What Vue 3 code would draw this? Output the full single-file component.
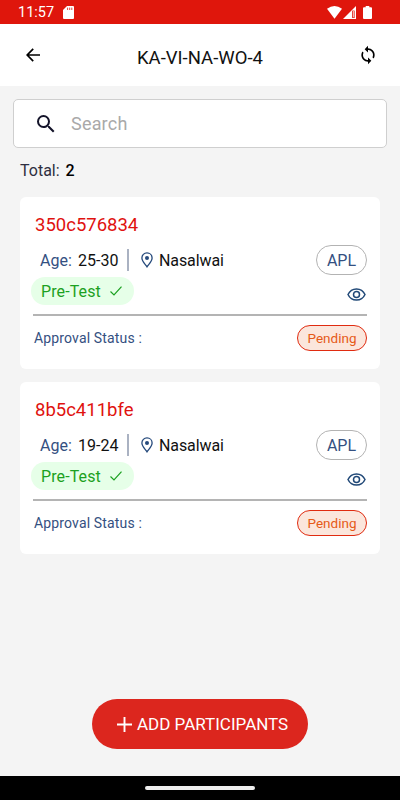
<script setup>
const total = 2
const participants = [
  { id: '350c576834', age: '25-30', place: 'Nasalwai', category: 'APL', status: 'Pending' },
  { id: '8b5c411bfe', age: '19-24', place: 'Nasalwai', category: 'APL', status: 'Pending' }
]
</script>

<template>
  <div class="screen">
    <div class="statusbar">
      <span class="clock">11:57</span>
      <svg class="sd" width="11" height="13" viewBox="0 0 11 13">
        <path d="M4 0H10Q11 0 11 1V12Q11 13 10 13H1Q0 13 0 12V4Z" fill="#fff" />
        <path d="M4.6 1.6V4M6.7 1.6V4M8.8 1.6V4" stroke="#df160c" stroke-width=".8" />
      </svg>
      <span class="grow"></span>
      <svg width="15" height="13" viewBox="0 0 15 13">
        <path d="M0 2.8Q7.5-2.6 15 2.8L7.5 12.8Z" fill="#fff" />
      </svg>
      <svg class="signal" width="13" height="13" viewBox="0 0 13 13">
        <path d="M0 13L13 0V13Z" fill="#fff" />
        <path d="M9.2 4.6H11.6V12H9.2Z" fill="#df160c" />
        <path d="M10.5 5V11.4" stroke="#fff" stroke-width=".7" />
      </svg>
      <svg class="battery" width="9" height="13" viewBox="0 0 9 13">
        <path d="M2.7 0H6.3V1.3H8Q9 1.3 9 2.3V12Q9 13 8 13H1Q0 13 0 12V2.3Q0 1.3 1 1.3H2.7Z" fill="#fff" />
      </svg>
    </div>

    <header class="header">
      <svg width="14" height="14" viewBox="0 0 14 14" fill="none" stroke="#000" stroke-width="1.7">
        <path d="M14 7H1.5M7.2 .8L1.2 7L7.2 13.2" />
      </svg>
      <h1 class="title">KA-VI-NA-WO-4</h1>
      <svg class="sync" width="20" height="20" viewBox="0 0 24 24" fill="#000">
        <path d="M12 4V1L8 5l4 4V6c3.31 0 6 2.69 6 6 0 1.01-.25 1.97-.7 2.8l1.46 1.46C19.54 15.03 20 13.57 20 12c0-4.42-3.58-8-8-8zm0 14c-3.31 0-6-2.69-6-6 0-1.01.25-1.97.7-2.8L5.24 7.74C4.46 8.97 4 10.43 4 12c0 4.42 3.58 8 8 8v3l4-4-4-4v3z" />
      </svg>
    </header>

    <main class="content">
      <div class="search">
        <svg width="24" height="24" viewBox="0 0 24 24" fill="#14142a">
          <path d="M15.5 14h-.79l-.28-.27A6.47 6.47 0 0 0 16 9.5 6.5 6.5 0 1 0 9.5 16c1.61 0 3.09-.59 4.23-1.57l.27.28v.79l5 4.99L20.49 19l-4.99-5zm-6 0C7.01 14 5 11.99 5 9.5S7.01 5 9.5 5 14 7.01 14 9.5 11.99 14 9.5 14z" />
        </svg>
        <span class="placeholder">Search</span>
      </div>
      <div class="total">Total: <span class="count">{{ total }}</span></div>

      <article v-for="p in participants" :key="p.id" class="card">
        <div class="pid">{{ p.id }}</div>
        <div class="info">
          <span class="label">Age:</span>
          <span class="age">{{ p.age }}</span>
          <span class="bar"></span>
          <svg class="pin" width="12" height="16" viewBox="0 0 12 16">
            <path d="M6 .9C3.1.9.9 3.1.9 5.9C.9 9.3 4.3 12.2 6 14.8C7.7 12.2 11.1 9.3 11.1 5.9C11.1 3.1 8.9.9 6 .9Z" fill="none" stroke="#264a7c" stroke-width="1.3" />
            <circle cx="6" cy="5.9" r="2" fill="#264a7c" />
          </svg>
          <span class="place">{{ p.place }}</span>
          <span class="category">{{ p.category }}</span>
        </div>
        <div class="test">
          <span class="pretest">Pre-Test
            <svg width="12" height="10" viewBox="0 0 12 10" fill="none" stroke="#1ca121" stroke-width="1.2">
              <path d="M.5 5.5L4 9L11.5 .7" />
            </svg>
          </span>
          <svg class="eye" width="19" height="13" viewBox="0 0 19 13" fill="none" stroke="#204877" stroke-width="1.5">
            <path d="M1 6.5C2.7 2.8 5.8 .9 9.5 .9S16.3 2.8 18 6.5C16.3 10.2 13.2 12.1 9.5 12.1S2.7 10.2 1 6.5Z" />
            <circle cx="9.5" cy="6.5" r="3" />
          </svg>
        </div>
        <div class="approval">
          <span class="approval-label">Approval Status :</span>
          <span class="pending">{{ p.status }}</span>
        </div>
      </article>

      <button class="add">
        <svg width="15" height="15" viewBox="0 0 15 15" stroke="#fff" stroke-width="1.9">
          <path d="M0 7.5H15M7.5 0V15" />
        </svg>
        <span>ADD PARTICIPANTS</span>
      </button>
    </main>

    <div class="navbar"><span class="handle"></span></div>
  </div>
</template>

<style>
body {
  margin: 0;
}
</style>

<style scoped>
.screen {
  box-sizing: border-box;
  width: 400px;
  height: 800px;
  display: flex;
  flex-direction: column;
  overflow: hidden;
  background: #f4f4f4;
  font-family: Roboto, sans-serif;
  font-weight: 400;
  color: #111;
}
.screen * {
  box-sizing: border-box;
}
svg {
  display: block;
  flex: none;
}
.statusbar {
  flex: none;
  height: 24px;
  display: flex;
  align-items: center;
  padding: 1px 28px 0 18px;
  background: #df160c;
  color: #fff;
}
.clock {
  width: 45px;
  font-size: 14.5px;
  line-height: 20px;
  white-space: nowrap;
}
.grow {
  flex: 1;
}
.signal {
  margin-left: 1px;
}
.battery {
  margin-left: 7px;
}
.header {
  flex: none;
  height: 62px;
  display: flex;
  align-items: center;
  padding: 0 22px 0 25.5px;
  background: #fff;
}
.title {
  margin: 5px 0 0;
  flex: 1;
  padding-left: 97.5px;
  font-size: 18.5px;
  font-weight: 400;
  line-height: 24px;
  white-space: nowrap;
}
.content {
  flex: 1;
  display: flex;
  flex-direction: column;
  padding: 13px 20px 0;
}
.search {
  height: 49px;
  margin: 0 -7px;
  padding-left: 20px;
  display: flex;
  align-items: center;
  background: #fff;
  border: 1px solid #cfcfcf;
  border-radius: 5px;
}
.placeholder {
  margin-left: 13px;
  font-size: 18px;
  letter-spacing: 0.2px;
  color: #a9a9a9;
}
.total {
  height: 49px;
  padding-top: 13px;
  font-size: 16px;
  line-height: 20px;
  color: #2e2e40;
}
.count {
  margin-left: 2px;
  font-weight: 500;
  color: #000;
}
.card {
  height: 172px;
  margin-bottom: 13px;
  padding: 12px 13px 0;
  background: #fff;
  border-radius: 6px;
}
.pid {
  height: 31px;
  padding: 1px 0 0 2px;
  font-size: 18.5px;
  line-height: 31px;
  color: #e0120f;
}
.info {
  height: 30px;
  margin-top: 5px;
  display: flex;
  align-items: center;
  font-size: 16px;
}
.label {
  width: 38px;
  margin-left: 7px;
  color: #345081;
}
.age {
  width: 49px;
}
.bar {
  width: 2px;
  height: 22px;
  background: #aab2c2;
}
.pin {
  margin: 0 6px 0 12px;
}
.place {
  letter-spacing: -0.1px;
}
.category {
  margin-left: auto;
  width: 51px;
  height: 30px;
  border: 1px solid #b3b3b3;
  border-radius: 15px;
  line-height: 29px;
  text-align: center;
  color: #345081;
}
.test {
  height: 28px;
  margin-top: 2px;
  display: flex;
  align-items: center;
  justify-content: space-between;
}
.pretest {
  width: 103px;
  height: 28px;
  margin-left: -2px;
  padding: 0 12px 0 10px;
  display: flex;
  align-items: center;
  justify-content: space-between;
  border-radius: 14px;
  background: #e6ffe8;
  color: #1ca121;
  font-size: 16px;
  letter-spacing: 0.1px;
}
.eye {
  margin: 6px 1px 0 0;
}
.approval {
  height: 37px;
  margin-top: 9px;
  padding-top: 8px;
  display: flex;
  align-items: center;
  justify-content: space-between;
  border-top: 2px solid #b4b4b4;
}
.approval-label {
  padding-left: 1px;
  font-size: 14px;
  letter-spacing: 0.15px;
  color: #345081;
}
.pending {
  width: 70px;
  height: 26px;
  border: 1px solid #e02b10;
  border-radius: 13px;
  background: #fbe6dc;
  font-size: 13.5px;
  line-height: 25px;
  text-align: center;
  color: #e65a18;
}
.add {
  align-self: center;
  width: 216px;
  height: 50px;
  margin: auto 0 27px;
  padding: 0 0 0 25px;
  display: flex;
  align-items: center;
  gap: 5px;
  border: 0;
  border-radius: 25px;
  background: #dc261e;
  color: #fff;
  font-family: inherit;
  font-size: 17px;
  font-weight: 400;
  white-space: nowrap;
}
.navbar {
  flex: none;
  height: 24px;
  display: flex;
  align-items: center;
  justify-content: center;
  background: #000;
}
.handle {
  width: 110px;
  height: 4px;
  border-radius: 2px;
  background: #eee;
}
</style>
